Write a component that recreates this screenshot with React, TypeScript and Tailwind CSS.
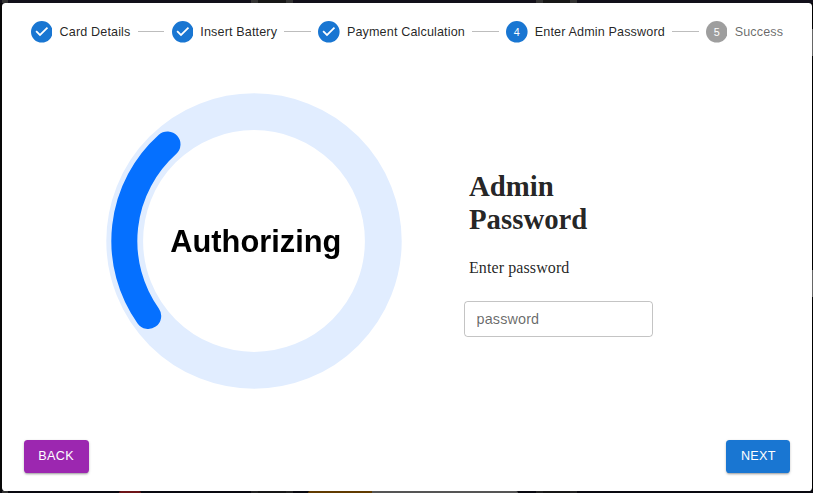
import React from "react";

const steps = ["Card Details", "Insert Battery", "Payment Calculation", "Enter Admin Password", "Success"];
const ACTIVE = 3;

function StepIcon({ index }: { index: number }) {
  if (index < ACTIVE) {
    return (
      <svg viewBox="0 0 24 24" className="size-[21.6px] shrink-0 fill-[#1976d2]">
        <path d="M12 0a12 12 0 1 0 0 24 12 12 0 0 0 0-24zm-2 17l-5-5 1.4-1.4 3.6 3.6 7.6-7.6L19 8l-9 9z" />
      </svg>
    );
  }
  return (
    <svg viewBox="0 0 24 24" className="size-[21.6px] shrink-0">
      <circle cx="12" cy="12" r="12" className={index === ACTIVE ? "fill-[#1976d2]" : "fill-[#9e9e9e]"} />
      <text x="12" y="12" textAnchor="middle" dominantBaseline="central" className="fill-white text-[12px]">
        {index + 1}
      </text>
    </svg>
  );
}

function Stepper() {
  return (
    <div className="flex h-[21.6px] items-center">
      {steps.map((label, i) => (
        <React.Fragment key={label}>
          {i > 0 && <div className="h-px flex-1 bg-[#bdbdbd]" />}
          <div className="flex items-center gap-[7.2px] px-[7.2px]">
            <StepIcon index={i} />
            <span
              className={`whitespace-nowrap text-[12.6px] leading-[18px] tracking-[0.135px] ${
                i <= ACTIVE ? "text-black/87" : "text-black/60"
              }`}
            >
              {label}
            </span>
          </div>
        </React.Fragment>
      ))}
    </div>
  );
}

function Spinner() {
  return (
    <svg viewBox="0 0 296 296" className="size-[296px] shrink-0" fill="none">
      <circle cx="148" cy="148" r="129.3" stroke="#e1edff" strokeWidth="36.8" />
      <path d="M61.5 51.4A129.7 129.7 0 0 0 42.2 223" stroke="#0570ff" strokeWidth="26" strokeLinecap="round" />
      <text x="64.3" y="159" textLength="171" className="fill-black text-[30.8px] font-bold blur-[0.4px]">
        Authorizing
      </text>
    </svg>
  );
}

const buttonClass =
  "h-[32.8px] rounded-[3.6px] text-[12.6px] tracking-[0.36px] text-white shadow-[0_2px_2px_-1px_rgba(0,0,0,0.25),0_1px_3px_rgba(0,0,0,0.2)]";

export default function App() {
  return (
    <div className="flex h-[493px] w-[813px] flex-col overflow-hidden bg-[#090910] font-['Liberation_Sans',sans-serif]">
      <div className="flex h-[3px] shrink-0 bg-[#12101a]">
        <div className="ml-[2px] w-[6px] bg-[#333]" />
        <div className="ml-[243px] w-[7px] bg-[#333]" />
        <div className="w-[28px] bg-[#171717]" />
        <div className="w-[7px] bg-[#333]" />
        <div className="ml-[243px] w-[7px] bg-[#333]" />
        <div className="w-[27px] bg-[#171717]" />
        <div className="w-[7px] bg-[#333]" />
      </div>
      <div className="flex h-[487.5px] shrink-0">
        <div className="w-[2px] bg-[#080808]" />
        <main className="flex w-[810px] flex-col rounded-[3.6px] bg-white px-[21.6px] pt-[18px] pb-[17.5px]">
          <Stepper />
          <div className="flex h-[394.7px] pt-[50.4px] pl-[82.9px]">
            <Spinner />
            <div className="ml-[61.5px] w-[189px] pt-[77.5px]">
              <div className="pl-[5px] font-['Liberation_Serif',serif] text-black/87">
                <h1 className="text-[28.8px] leading-[33px] font-bold">
                  Admin
                  <br />
                  Password
                </h1>
                <p className="mt-[23px] text-[16px] leading-[18px] tracking-[0.1px]">Enter password</p>
              </div>
              <input
                type="text"
                placeholder="password"
                className="mt-[24px] block h-[36px] w-[189px] rounded-[3.6px] border border-black/23 px-[11.6px] text-[14.4px] tracking-[0.135px] outline-none placeholder:text-black/60"
              />
            </div>
          </div>
          <div className="mt-auto flex justify-between">
            <button className={`${buttonClass} w-[65px] bg-[#9c27b0]`}>BACK</button>
            <button className={`${buttonClass} w-[64px] bg-[#1976d2]`}>NEXT</button>
          </div>
        </main>
        <div className="flex w-px flex-col bg-black">
          <div className="mt-[26px] h-[27px] bg-[#666]" />
          <div className="mt-[214px] h-[27px] bg-[#666]" />
        </div>
      </div>
      <div className="flex h-[2.5px] shrink-0">
        <div className="ml-[2px] w-[6px] bg-[#333]" />
        <div className="ml-[111px] w-[22px] rounded-t-full bg-[#6d1418]" />
        <div className="ml-[110px] w-[7px] bg-[#222]" />
        <div className="w-[28px] bg-[#171717]" />
        <div className="w-[7px] bg-[#222]" />
        <div className="ml-[15px] w-[64px] rounded-tl-[2px] bg-[#613b00]" />
        <div className="w-[146px] rounded-tr-[2px] bg-[#555]" />
        <div className="ml-[18px] w-[7px] bg-[#222]" />
        <div className="w-[27px] bg-[#171717]" />
        <div className="w-[7px] bg-[#222]" />
      </div>
    </div>
  );
}
